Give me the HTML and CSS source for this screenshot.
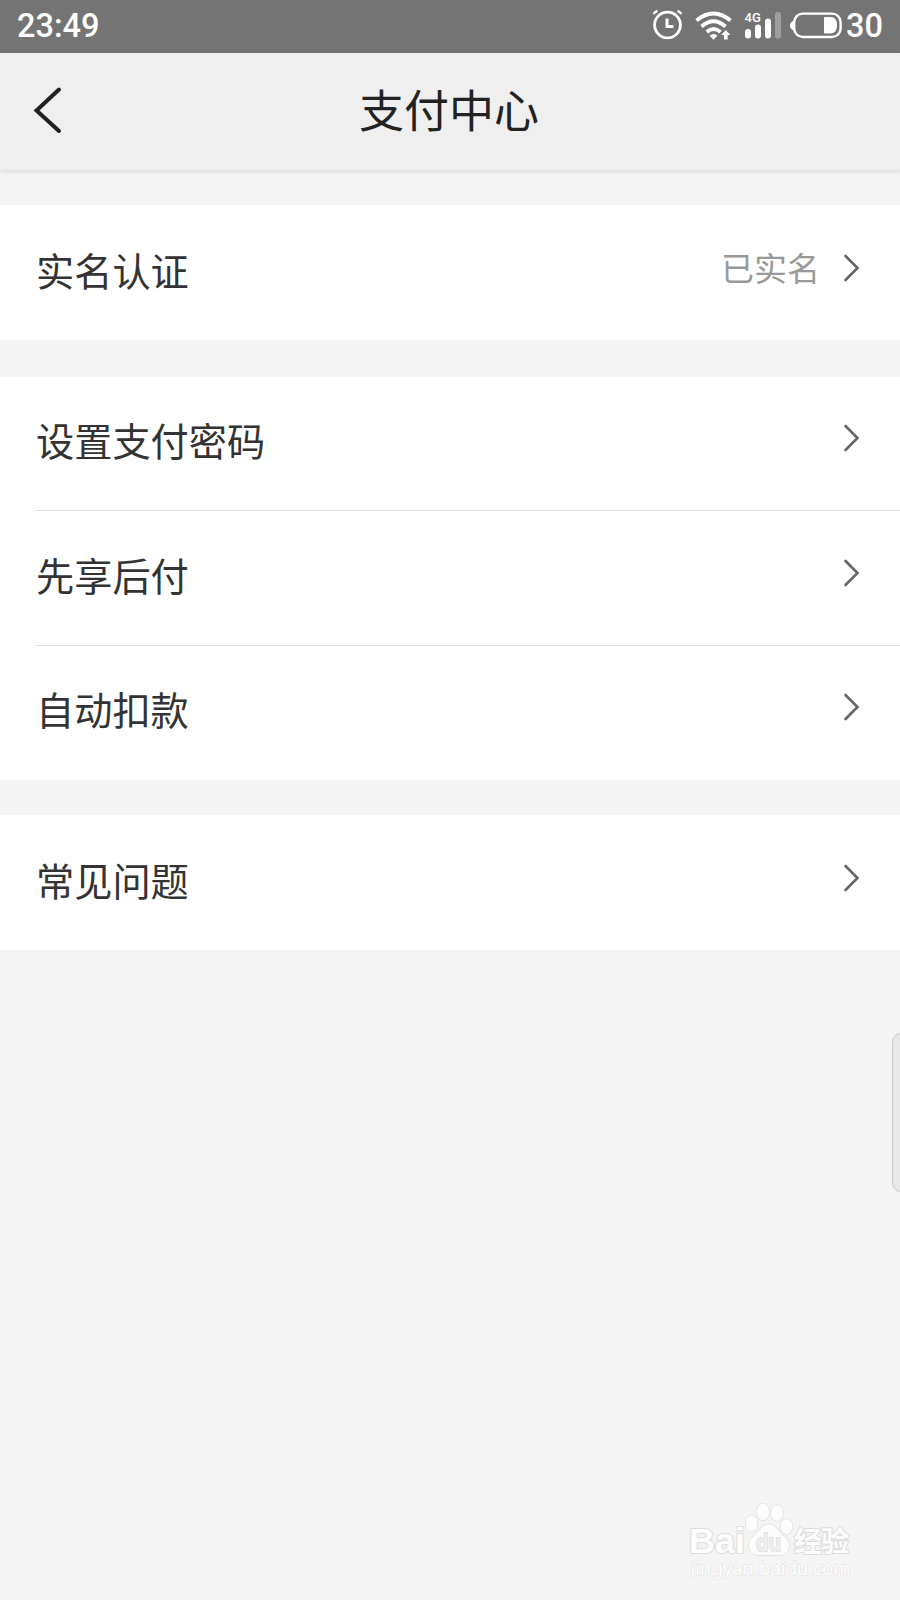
FILE: index.html
```
<!DOCTYPE html>
<html lang="zh-CN">
<head>
  <meta charset="UTF-8">
  <meta name="viewport" content="width=device-width, initial-scale=1.0">
  <title>支付中心</title>
  <link rel="stylesheet" href="styles.css">
</head>
<body>
  <div class="status-bar">
    <span class="time">23:49</span>
    <svg class="status-icons" width="190" height="36" viewBox="0 0 190 36" fill="none" stroke="#fff">
      <!-- alarm -->
      <g stroke-width="2.8">
        <circle cx="15.5" cy="18" r="12.9"/>
        <path d="M15 11.5v8h6.500" stroke-width="3"/>
        <path d="M1.500 7Q3 4.500 5.500 4M29.500 7Q28 4.500 25.500 4" stroke-width="2.4"/>
      </g>
      <!-- wifi -->
      <g stroke-width="3.8">
        <path d="M44.500 13.500Q61.500 -.5 78.500 13.500"/>
        <path d="M49.500 19.500Q61.500 9 73.500 19.500"/>
        <path d="M54.800 25Q61.500 19 68.500 25"/>
        <path d="M57.500 28.800Q61.500 25 65.500 28.800L61.500 32.700z" fill="#fff" stroke="none"/>
      </g>
      <path d="M73.800 23l4.700 5h-2.800v4.500H72V28h-2.900z" fill="#fff" stroke="none"/>
      <!-- signal -->
      <text x="92.500" y="14.500" class="net">4G</text>
      <g stroke="none" fill="#fff">
        <rect x="93" y="22" width="6" height="9.500" rx="3"/>
        <rect x="103" y="17.500" width="6" height="14" rx="3"/>
        <rect x="113" y="11.500" width="6" height="20" rx="3"/>
        <rect x="123" y="5" width="6" height="26.500" rx="2.500" opacity=".3"/>
      </g>
      <!-- battery -->
      <rect x="142.200" y="6.600" width="46.400" height="23.400" rx="8.500" stroke-width="2.4"/>
      <path d="M142 13.500q-4 1.500-4 5t4 5z" fill="#fff" stroke="none"/>
      <path d="M173 10h5.500q6.500 0 6.500 8.300t-6.500 8.300H173q-1 0-1-1V11q0-1 1-1z" fill="#fff" stroke="none"/>
    </svg>
    <span class="battery">30</span>
  </div>

  <header>
    <svg class="back" width="30" height="48" viewBox="0 0 30 48">
      <path d="M26 3.500L3.500 24.500L26 45"/>
    </svg>
    <h1>支付中心</h1>
  </header>

  <main>
    <section class="group">
      <div class="row">
        <span class="label">实名认证</span>
        <span class="value">已实名</span>
        <svg class="arrow" viewBox="0 0 18 30"><path d="M2.500 3L14.500 15L2.500 27"/></svg>
      </div>
    </section>

    <section class="group group-main">
      <div class="row">
        <span class="label">设置支付密码</span>
        <svg class="arrow" viewBox="0 0 18 30"><path d="M2.500 3L14.500 15L2.500 27"/></svg>
      </div>
      <div class="row">
        <span class="label">先享后付</span>
        <svg class="arrow" viewBox="0 0 18 30"><path d="M2.500 3L14.500 15L2.500 27"/></svg>
      </div>
      <div class="row">
        <span class="label">自动扣款</span>
        <svg class="arrow" viewBox="0 0 18 30"><path d="M2.500 3L14.500 15L2.500 27"/></svg>
      </div>
    </section>

    <section class="group">
      <div class="row">
        <span class="label">常见问题</span>
        <svg class="arrow" viewBox="0 0 18 30"><path d="M2.500 3L14.500 15L2.500 27"/></svg>
      </div>
    </section>
  </main>

  <div class="side-handle"></div>

  <svg class="watermark" width="190" height="100" viewBox="0 0 190 100">
    <text class="logo" x="9" y="63" textLength="56" lengthAdjust="spacingAndGlyphs">Bai</text>
    <g class="paw">
      <ellipse cx="71.500" cy="33.500" rx="6" ry="8"/>
      <ellipse cx="83" cy="22" rx="6" ry="8.500"/>
      <ellipse cx="97" cy="23" rx="6" ry="8"/>
      <ellipse cx="106.500" cy="36.500" rx="6" ry="7.500"/>
      <path d="M89 34.500C82 34.500 79.500 41 74 46C69 50.500 67.500 55 70 60C73 66.500 79 65 89 65S105 66.500 108 60C110.500 54 108 49.500 103.500 46C98 41 96 34.500 89 34.500Z"/>
    </g>
    <text class="du" x="76" y="60.500" textLength="25" lengthAdjust="spacingAndGlyphs">du</text>
    <text class="cn" x="114" y="61.500" textLength="55">经验</text>
    <text class="url" x="10.500" y="84.500" textLength="160" lengthAdjust="spacingAndGlyphs">jingyan.baidu.com</text>
  </svg>
</body>
</html>
```
FILE: styles.css
```
* {
  box-sizing: border-box;
}
body {
  margin: 0;
  position: relative;
  min-height: 1600px;
  background: #f4f4f4;
  color: #333;
  font-family: "Noto Sans CJK SC", sans-serif;
  overflow: hidden;
}
.status-bar {
  height: 53px;
  padding: 0 17px 3px;
  display: flex;
  align-items: center;
  background: #747474;
  color: white;
  font: 500 32.500px/50px Roboto, sans-serif;
}
.time, .battery {
  padding-top: 1px;
}
.status-icons {
  margin-left: auto;
  margin-right: 4px;
}
.net {
  font: 500 13px Roboto, sans-serif;
  fill: white;
  stroke: none;
}
header {
  position: relative;
  height: 117px;
  display: flex;
  align-items: center;
  justify-content: center;
  background: #efefef;
  box-shadow: 0 1px 5px rgba(0,0,0,0.14);
}
.back {
  position: absolute;
  left: 33px;
  top: 33px;
  fill: none;
  stroke: #222;
  stroke-width: 4;
  stroke-linecap: round;
}
h1 {
  margin: 0;
  padding: 0 2px 5px 0;
  font-size: 45px;
  line-height: 60px;
  font-weight: 400;
  color: #222;
}
main {
  padding-top: 35px;
}
.group {
  background: white;
}
.group-main {
  margin: 37px 0 35px;
}
.row {
  position: relative;
  height: 135px;
  display: flex;
  align-items: center;
  padding: 0 39px 10px 36px;
}
.group-main .row {
  padding-bottom: 14px;
}
.group-main .row:last-child {
  height: 133px;
}
.row + .row::before {
  content: "";
  position: absolute;
  top: -2px;
  left: 35px;
  right: 0;
  height: 1px;
  background: #e2e2e2;
}
.label {
  font-size: 38.200px;
  line-height: 56px;
  padding-top: 4px;
}
.value {
  margin-left: auto;
  padding-bottom: 2px;
  font-size: 33px;
  line-height: 48px;
  color: #999;
}
.arrow {
  width: 18px;
  height: 30px;
  margin-left: auto;
  fill: none;
  stroke: #666;
  stroke-width: 2.6;
  stroke-linecap: round;
}
.value + .arrow {
  margin-left: 23px;
}
.side-handle {
  position: absolute;
  top: 1033px;
  right: -12px;
  width: 20px;
  height: 159px;
  background: #e8e8e8;
  border: 1px solid #c8c8c8;
  border-radius: 9px;
}
.watermark {
  position: absolute;
  left: 680px;
  top: 1490px;
  fill: #fdfdfd;
  stroke: #dcdcdc;
  stroke-width: 2;
  paint-order: stroke;
}
.logo {
  font: bold 35px "Liberation Sans", sans-serif;
}
.paw {
  stroke-width: 1.3;
}
.du {
  font: bold 23px "Liberation Sans", sans-serif;
  fill: #efefef;
  stroke-width: 1.5;
}
.cn {
  font: bold 28px "Noto Sans CJK SC", sans-serif;
}
.url {
  font: 18px "Noto Sans", sans-serif;
  stroke: #e3e3e3;
  stroke-width: 1.2;
}
```
